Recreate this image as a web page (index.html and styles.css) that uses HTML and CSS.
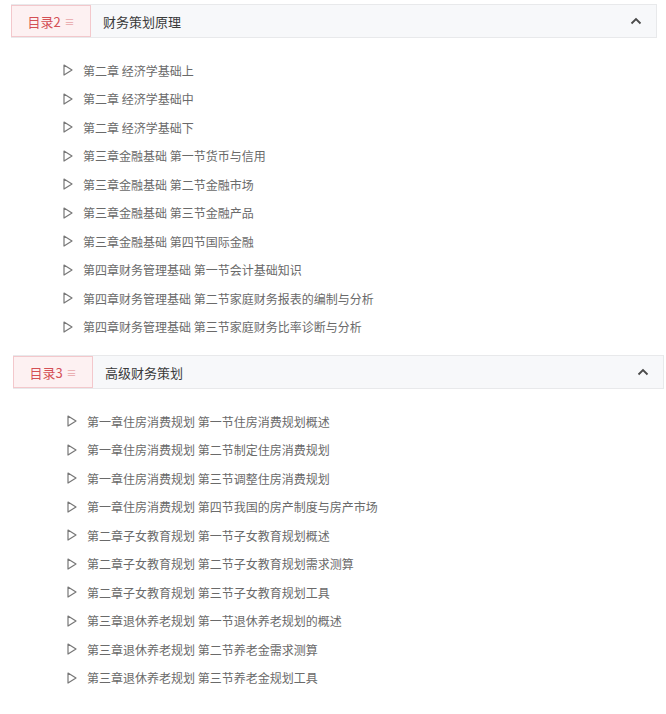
FILE: index.html
```html
<!DOCTYPE html>
<html lang="zh">
<head>
<meta charset="utf-8">
<title>目录</title>
<link rel="stylesheet" href="styles.css">
</head>
<body>
<div class="page">
  <section class="chapter chapter-a">
    <div class="head">
      <div class="tag">目录2 <span class="tag-icon">≡</span></div>
      <div class="title">财务策划原理</div>
      <svg class="chev" width="12" height="8" viewBox="0 0 12 8"><path d="M1.5 6.5 L6 2 L10.5 6.5" fill="none" stroke="#4a4a4a" stroke-width="1.8"/></svg>
    </div>
    <ul class="list">
      <li><svg class="tri" width="10" height="12" viewBox="0 0 10 12"><path d="M1 1 L9 6 L1 11 Z" fill="none" stroke="#777" stroke-width="1.2" stroke-linejoin="round"/></svg>第二章 经济学基础上</li>
      <li><svg class="tri" width="10" height="12" viewBox="0 0 10 12"><path d="M1 1 L9 6 L1 11 Z" fill="none" stroke="#777" stroke-width="1.2" stroke-linejoin="round"/></svg>第二章 经济学基础中</li>
      <li><svg class="tri" width="10" height="12" viewBox="0 0 10 12"><path d="M1 1 L9 6 L1 11 Z" fill="none" stroke="#777" stroke-width="1.2" stroke-linejoin="round"/></svg>第二章 经济学基础下</li>
      <li><svg class="tri" width="10" height="12" viewBox="0 0 10 12"><path d="M1 1 L9 6 L1 11 Z" fill="none" stroke="#777" stroke-width="1.2" stroke-linejoin="round"/></svg>第三章金融基础 第一节货币与信用</li>
      <li><svg class="tri" width="10" height="12" viewBox="0 0 10 12"><path d="M1 1 L9 6 L1 11 Z" fill="none" stroke="#777" stroke-width="1.2" stroke-linejoin="round"/></svg>第三章金融基础 第二节金融市场</li>
      <li><svg class="tri" width="10" height="12" viewBox="0 0 10 12"><path d="M1 1 L9 6 L1 11 Z" fill="none" stroke="#777" stroke-width="1.2" stroke-linejoin="round"/></svg>第三章金融基础 第三节金融产品</li>
      <li><svg class="tri" width="10" height="12" viewBox="0 0 10 12"><path d="M1 1 L9 6 L1 11 Z" fill="none" stroke="#777" stroke-width="1.2" stroke-linejoin="round"/></svg>第三章金融基础 第四节国际金融</li>
      <li><svg class="tri" width="10" height="12" viewBox="0 0 10 12"><path d="M1 1 L9 6 L1 11 Z" fill="none" stroke="#777" stroke-width="1.2" stroke-linejoin="round"/></svg>第四章财务管理基础 第一节会计基础知识</li>
      <li><svg class="tri" width="10" height="12" viewBox="0 0 10 12"><path d="M1 1 L9 6 L1 11 Z" fill="none" stroke="#777" stroke-width="1.2" stroke-linejoin="round"/></svg>第四章财务管理基础 第二节家庭财务报表的编制与分析</li>
      <li><svg class="tri" width="10" height="12" viewBox="0 0 10 12"><path d="M1 1 L9 6 L1 11 Z" fill="none" stroke="#777" stroke-width="1.2" stroke-linejoin="round"/></svg>第四章财务管理基础 第三节家庭财务比率诊断与分析</li>
    </ul>
  </section>
  <section class="chapter chapter-b">
    <div class="head">
      <div class="tag">目录3 <span class="tag-icon">≡</span></div>
      <div class="title">高级财务策划</div>
      <svg class="chev" width="12" height="8" viewBox="0 0 12 8"><path d="M1.5 6.5 L6 2 L10.5 6.5" fill="none" stroke="#4a4a4a" stroke-width="1.8"/></svg>
    </div>
    <ul class="list">
      <li><svg class="tri" width="10" height="12" viewBox="0 0 10 12"><path d="M1 1 L9 6 L1 11 Z" fill="none" stroke="#777" stroke-width="1.2" stroke-linejoin="round"/></svg>第一章住房消费规划 第一节住房消费规划概述</li>
      <li><svg class="tri" width="10" height="12" viewBox="0 0 10 12"><path d="M1 1 L9 6 L1 11 Z" fill="none" stroke="#777" stroke-width="1.2" stroke-linejoin="round"/></svg>第一章住房消费规划 第二节制定住房消费规划</li>
      <li><svg class="tri" width="10" height="12" viewBox="0 0 10 12"><path d="M1 1 L9 6 L1 11 Z" fill="none" stroke="#777" stroke-width="1.2" stroke-linejoin="round"/></svg>第一章住房消费规划 第三节调整住房消费规划</li>
      <li><svg class="tri" width="10" height="12" viewBox="0 0 10 12"><path d="M1 1 L9 6 L1 11 Z" fill="none" stroke="#777" stroke-width="1.2" stroke-linejoin="round"/></svg>第一章住房消费规划 第四节我国的房产制度与房产市场</li>
      <li><svg class="tri" width="10" height="12" viewBox="0 0 10 12"><path d="M1 1 L9 6 L1 11 Z" fill="none" stroke="#777" stroke-width="1.2" stroke-linejoin="round"/></svg>第二章子女教育规划 第一节子女教育规划概述</li>
      <li><svg class="tri" width="10" height="12" viewBox="0 0 10 12"><path d="M1 1 L9 6 L1 11 Z" fill="none" stroke="#777" stroke-width="1.2" stroke-linejoin="round"/></svg>第二章子女教育规划 第二节子女教育规划需求测算</li>
      <li><svg class="tri" width="10" height="12" viewBox="0 0 10 12"><path d="M1 1 L9 6 L1 11 Z" fill="none" stroke="#777" stroke-width="1.2" stroke-linejoin="round"/></svg>第二章子女教育规划 第三节子女教育规划工具</li>
      <li><svg class="tri" width="10" height="12" viewBox="0 0 10 12"><path d="M1 1 L9 6 L1 11 Z" fill="none" stroke="#777" stroke-width="1.2" stroke-linejoin="round"/></svg>第三章退休养老规划 第一节退休养老规划的概述</li>
      <li><svg class="tri" width="10" height="12" viewBox="0 0 10 12"><path d="M1 1 L9 6 L1 11 Z" fill="none" stroke="#777" stroke-width="1.2" stroke-linejoin="round"/></svg>第三章退休养老规划 第二节养老金需求测算</li>
      <li><svg class="tri" width="10" height="12" viewBox="0 0 10 12"><path d="M1 1 L9 6 L1 11 Z" fill="none" stroke="#777" stroke-width="1.2" stroke-linejoin="round"/></svg>第三章退休养老规划 第三节养老金规划工具</li>
    </ul>
  </section>
</div>
</body>
</html>
```
FILE: styles.css
```css
html, body {
  margin: 0;
  padding: 0;
  background: #ffffff;
}
body {
  font-family: "Noto Sans CJK SC", "Noto Sans", sans-serif;
}
.page {
  padding-top: 4px;
}
.chapter-a {
  margin-left: 11px;
  width: 646px;
}
.chapter-b {
  margin-left: 13px;
  width: 651px;
  margin-top: 14px;
}
.head {
  display: flex;
  align-items: center;
  height: 32px;
  background: #f7f8fa;
  border: 1px solid #e8e9eb;
  border-left: none;
}
.tag {
  box-sizing: border-box;
  width: 80px;
  height: 32px;
  display: flex;
  align-items: center;
  justify-content: center;
  background: #fdf1f2;
  border: 1px solid #f3c8cc;
  color: #d44f55;
  font-size: 13px;
  white-space: pre;
}
.tag-icon {
  color: #e7a4a8;
  font-size: 10px;
  margin-left: 1px;
}
.title {
  flex: 1;
  padding-left: 12px;
  font-size: 13px;
  color: #3a3a3a;
}
.chev {
  margin-right: 14px;
}
.list {
  list-style: none;
  margin: 0;
  padding: 18px 0 0 52px;
}
.chapter-b .list {
  padding-left: 54px;
}
.list li {
  display: flex;
  align-items: center;
  height: 28.5px;
  font-size: 12px;
  color: #6a6a6a;
}
.tri {
  margin-right: 10px;
  flex: none;
}
```
